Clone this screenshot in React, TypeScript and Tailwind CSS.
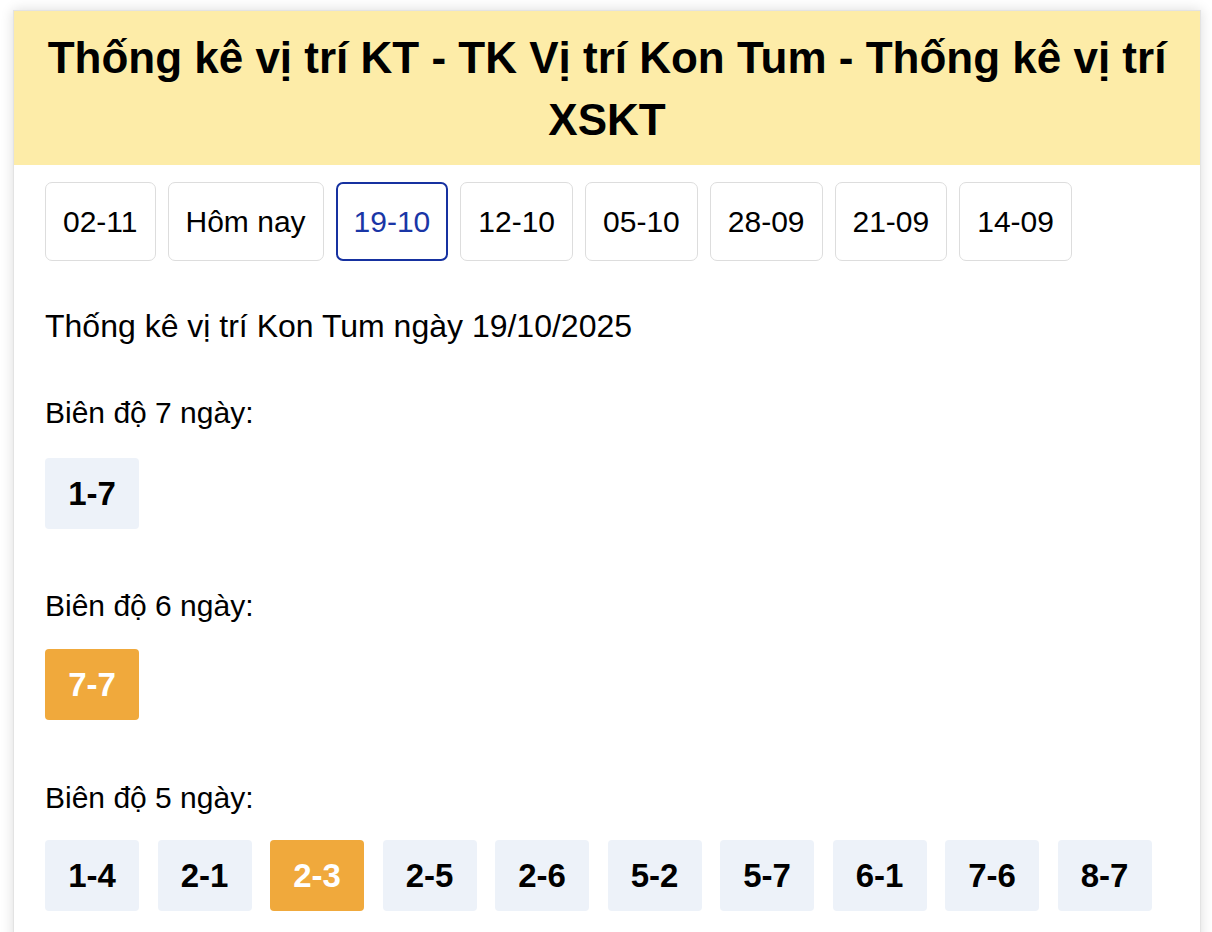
import React from "react";

const tabs = ["02-11", "Hôm nay", "19-10", "12-10", "05-10", "28-09", "21-09", "14-09"];

type Chip = { t: string; hot?: boolean };

const groups: { label: string; chips: Chip[]; mt: string; chipMt: string }[] = [
  { label: "Biên độ 7 ngày:", chips: [{ t: "1-7" }], mt: "mt-[47px]", chipMt: "mt-[25px]" },
  { label: "Biên độ 6 ngày:", chips: [{ t: "7-7", hot: true }], mt: "mt-[57px]", chipMt: "mt-[23px]" },
  {
    label: "Biên độ 5 ngày:",
    chips: [
      { t: "1-4" },
      { t: "2-1" },
      { t: "2-3", hot: true },
      { t: "2-5" },
      { t: "2-6" },
      { t: "5-2" },
      { t: "5-7" },
      { t: "6-1" },
      { t: "7-6" },
      { t: "8-7" },
    ],
    mt: "mt-[58px]",
    chipMt: "mt-[22px]",
  },
];

export default function App() {
  return (
    <div
      className="min-h-[932px] bg-white pt-[10px] pl-[13px] overflow-hidden"
      style={{ fontFamily: '"Liberation Sans", Arial, Helvetica, sans-serif' }}
    >
      <div className="w-[1188px] min-h-[940px] border border-[#e3e3e3] bg-white shadow-[0_0_12px_rgba(0,0,0,0.14)]">
        <div className="bg-[#fdeca8] pt-[16px] pb-[14px] px-[20px] text-center text-[44px] font-bold leading-[62px] text-black">
          Thống kê vị trí KT - TK Vị trí Kon Tum - Thống kê vị trí XSKT
        </div>
        <div className="px-[31px]">
          <div className="mt-[17px] flex gap-[12px]">
            {tabs.map((t) => {
              const active = t === "19-10";
              return (
                <div
                  key={t}
                  className={
                    active
                      ? "flex h-[79px] items-center rounded-[7px] border-2 border-[#1631a0] px-[16px] text-[30px] text-[#1a36a6]"
                      : "flex h-[79px] items-center rounded-[7px] border-[1.5px] border-[#dddddd] px-[17px] text-[30px] text-black"
                  }
                >
                  {t}
                </div>
              );
            })}
          </div>
          <div className="mt-[45px] text-[32px] leading-[40px] text-black">
            Thống kê vị trí Kon Tum ngày 19/10/2025
          </div>
          {groups.map((g) => (
            <div key={g.label}>
              <div className={`${g.mt} text-[30px] leading-[40px] text-black`}>{g.label}</div>
              <div className={`${g.chipMt} flex gap-[18.5px]`}>
                {g.chips.map((c) => (
                  <div
                    key={c.t}
                    className={
                      c.hot
                        ? "flex h-[71px] w-[94px] items-center justify-center rounded-[4px] bg-[#f0a93c] text-[33px] font-bold text-white"
                        : "flex h-[71px] w-[94px] items-center justify-center rounded-[4px] bg-[#edf2f9] text-[33px] font-bold text-black"
                    }
                  >
                    {c.t}
                  </div>
                ))}
              </div>
            </div>
          ))}
        </div>
      </div>
    </div>
  );
}
